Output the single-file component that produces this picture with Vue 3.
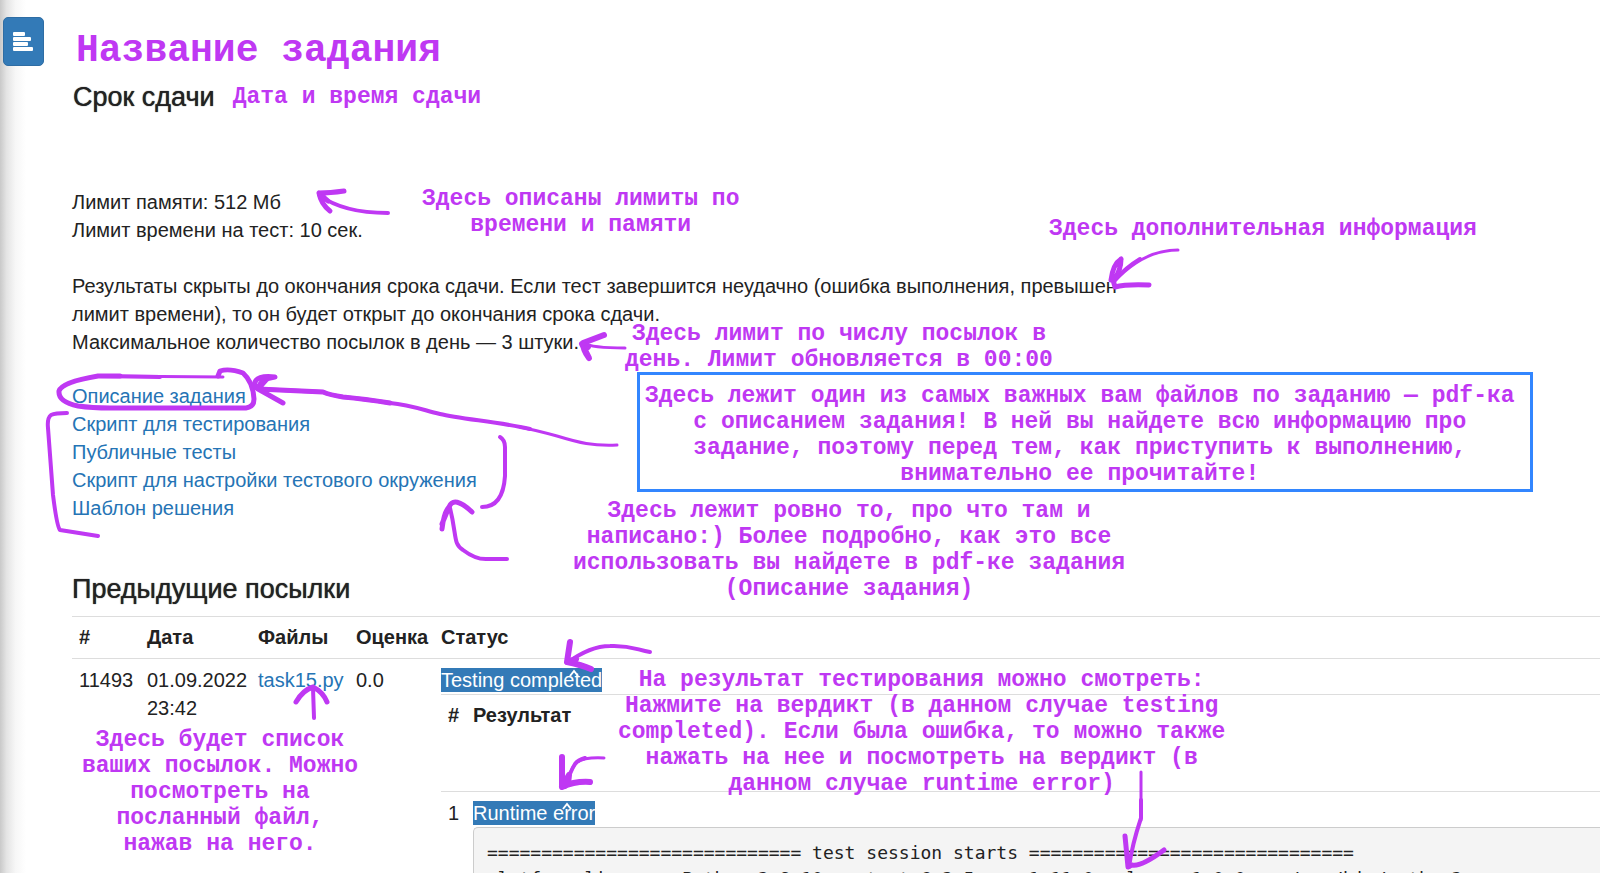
<script setup>
const files = [
  'Скрипт для тестирования',
  'Публичные тесты',
  'Скрипт для настройки тестового окружения',
  'Шаблон решения',
]

const log =
  '='.repeat(29) + ' test session starts ' + '='.repeat(30) +
  '\nplatform linux -- Python 3.8.10, pytest-6.2.5, py-1.11.0, pluggy-1.0.0 -- /usr/bin/python3'

const notes = [
  { id: 'note-limits', lines: ['Здесь описаны лимиты по', 'времени и памяти'] },
  { id: 'note-info', lines: ['Здесь дополнительная информация'] },
  { id: 'note-quota', lines: ['Здесь лимит по числу посылок в', 'день. Лимит обновляется в 00:00'] },
  {
    id: 'note-pdf',
    lines: [
      'Здесь лежит один из самых важных вам файлов по заданию — pdf-ка',
      'с описанием задания! В ней вы найдете всю информацию про',
      'задание, поэтому перед тем, как приступить к выполнению,',
      'внимательно ее прочитайте!',
    ],
  },
  {
    id: 'note-files',
    lines: [
      'Здесь лежит ровно то, про что там и',
      'написано:) Более подробно, как это все',
      'использовать вы найдете в pdf-ке задания',
      '(Описание задания)',
    ],
  },
  {
    id: 'note-verdict',
    lines: [
      'На результат тестирования можно смотреть:',
      'Нажмите на вердикт (в данном случае testing',
      'completed). Если была ошибка, то можно также',
      'нажать на нее и посмотреть на вердикт (в',
      'данном случае runtime error)',
    ],
  },
  {
    id: 'note-history',
    lines: ['Здесь будет список', 'ваших посылок. Можно', 'посмотреть на', 'посланный файл,', 'нажав на него.'],
  },
]
</script>

<template>
  <div class="page">
    <div class="edge"></div>
    <button class="menu" type="button" aria-label="Меню">
      <svg width="22" height="20" viewBox="0 0 22 20">
        <g fill="#fff">
          <rect x="1" y="0" width="12" height="4" rx="1" />
          <rect x="1" y="5" width="18" height="4" rx="1" />
          <rect x="1" y="10" width="15" height="4" rx="1" />
          <rect x="1" y="15" width="20" height="4" rx="1" />
        </g>
      </svg>
    </button>

    <main class="content">
      <h1>Название задания</h1>
      <div class="deadline">
        <h2>Срок сдачи</h2>
        <span class="when">Дата и время сдачи</span>
      </div>

      <p class="limits">Лимит памяти: 512 Мб<br />Лимит времени на тест: 10 сек.</p>
      <p class="rules">
        Результаты скрыты до окончания срока сдачи. Если тест завершится неудачно (ошибка выполнения, превышен<br />
        лимит времени), то он будет открыт до окончания срока сдачи.<br />
        Максимальное количество посылок в день — 3 штуки.
      </p>
      <ul class="files">
        <li><a href="#">Описание задания</a></li>
        <li v-for="f in files" :key="f"><a href="#">{{ f }}</a></li>
      </ul>

      <h2 class="previous">Предыдущие посылки</h2>
      <table class="outer">
        <thead>
          <tr>
            <th class="c-id">#</th>
            <th class="c-date">Дата</th>
            <th class="c-file">Файлы</th>
            <th class="c-mark">Оценка</th>
            <th>Статус</th>
          </tr>
        </thead>
        <tbody>
          <tr>
            <td>11493</td>
            <td>01.09.2022 23:42</td>
            <td><a href="#">task15.py</a></td>
            <td>0.0</td>
            <td class="status">
              <button class="verdict" type="button">
                Testing completed
                <svg class="caret" width="12" height="8" viewBox="0 0 12 8"><path d="M2 7 6 2 10 7" /></svg>
              </button>
              <table class="inner">
                <thead>
                  <tr><th class="c-num">#</th><th>Результат</th></tr>
                </thead>
                <tbody>
                  <tr>
                    <td>1</td>
                    <td>
                      <button class="verdict" type="button">
                        Runtime error
                        <svg class="caret" width="12" height="8" viewBox="0 0 12 8"><path d="M2 7 6 2 10 7" /></svg>
                      </button>
                      <pre>{{ log }}</pre>
                    </td>
                  </tr>
                </tbody>
              </table>
            </td>
          </tr>
        </tbody>
      </table>
    </main>

    <p v-for="n in notes" :key="n.id" class="note" :class="n.id">
      <span v-for="l in n.lines" :key="l">{{ l }}</span>
    </p>

    <svg class="ink" width="1600" height="873" viewBox="0 0 1600 873">
      <g fill="none" stroke="#bf38f3" stroke-linecap="round" stroke-linejoin="round">
        <path stroke-width="5" d="M344 191Q330 193 319 193Q321 204 330 211M319 193L328 201" />
        <path stroke-width="4" d="M319 195Q343 213 388 213" />

        <path stroke-width="3" d="M1178 250Q1143 250 1114 282" />
        <path stroke-width="4" d="M1140 259Q1125 268 1114 281" />
        <path stroke-width="5" d="M1121 259Q1113 264 1111 280L1114 280Q1121 270 1121 259M1113 280L1115 287Q1126 284 1149 285" />

        <path stroke-width="6" d="M604 335L583 343Q583 350 589 358L582 344L588 347" />
        <path stroke-width="3" d="M583 343Q592 348 625 348" />

        <path stroke-width="3" d="M223 377L100 376" />
        <path stroke-width="4" d="M160 377L98 376" />
        <path stroke-width="5" d="M120 376L98 376Q62 382 59 391Q58 402 78 406Q92 408 110 408L246 408Q254 407 254 399Q253 382 243 373Q229 368 220 371L218 376" />
        <path stroke-width="3" d="M617 445C592 446 580 443 557 436Q535 430 520 427" />
        <path stroke-width="4" d="M530 429C500 422 460 419 440 414C420 409 410 405 390 403Q365 399 343 397Q330 395 323 392Q300 391 258 389" />
        <path stroke-width="5" d="M390 403Q365 399 343 397Q330 395 323 392Q300 391 258 389L283 403M258 389Q260 379 275 377Q258 375 255 382Q253 386 258 389L266 380" />

        <path stroke-width="4" d="M67 413Q55 413 51 415Q47 418 48 428L53 495Q57 527 60 530L98 536" />
        <path stroke-width="4" d="M500 437Q505 440 505 447L505 476Q503 507 482 507" />
        <path stroke-width="5" d="M442 529Q444 512 449 507L442 524M449 507Q454 495 472 512" />
        <path stroke-width="4" d="M450 508C457 536 453 544 463 550Q476 560 488 559L507 559" />

        <path stroke-width="4" d="M650 652C637 650 631 645 610 646Q590 646 567 663" />
        <path stroke-width="6" d="M570 642L567 662L576 659M567 662Q582 665 591 669" />
        <path stroke-width="3" d="M604 758Q585 757 577 762Q572 766 565 787" />
        <path stroke-width="4" d="M585 758Q578 760 575 764Q571 770 565 787" />
        <path stroke-width="6" d="M562 757L562 787L569 775L568 784M562 787Q575 781 590 782" />

        <path stroke-width="4" d="M314 718L313 688" />
        <path stroke-width="5" d="M296 702Q303 690 313 687Q323 692 327 702" />

        <path stroke-width="3" d="M1141 772L1141 820" />
        <path stroke-width="4" d="M1141 800L1141 818Q1132 845 1129 867" />
        <path stroke-width="5" d="M1125 836L1128 867L1132 865Q1141 867 1164 850" />
      </g>
    </svg>
  </div>
</template>

<style>
html,
body {
  background: #fff;
}
</style>

<style scoped>
.page {
  position: relative;
  height: 100vh;
  overflow: hidden;
  font-family: "Liberation Sans", Arial, sans-serif;
  font-size: 20px;
  line-height: 28px;
  color: #222;
}
.edge {
  position: absolute;
  inset: 0 auto 0 0;
  width: 26px;
  background: linear-gradient(90deg, #c9c9c9, #e4e4e4 25%, #f7f7f7 60%, #fff);
}
.menu {
  position: absolute;
  top: 17px;
  left: 3px;
  width: 41px;
  height: 49px;
  padding: 0 0 0 8px;
  border: 1px solid #2e6da4;
  border-radius: 5px;
  background: #337ab7;
  text-align: left;
}
.menu svg {
  display: block;
}
.content {
  padding: 29px 0 0 72px;
}
h1,
h2,
p,
ul,
pre {
  margin: 0;
  padding: 0;
}
h1 {
  padding-left: 4px;
  font: bold 38px/44px "Liberation Mono", monospace;
  color: #bf38f3;
}
h2 {
  font-size: 27px;
  line-height: 30px;
  font-weight: 400;
  text-shadow: 0 0 1px currentColor;
}
.deadline {
  display: flex;
  align-items: center;
  gap: 18px;
  padding: 9px 0 0 1px;
}
.when {
  font: bold 23px/26px "Liberation Mono", monospace;
  color: #bf38f3;
}
.limits {
  padding-top: 76px;
}
.rules {
  padding-top: 28px;
  white-space: nowrap;
}
.files {
  padding-top: 26px;
  list-style: none;
}
a {
  color: #2574b5;
  text-decoration: none;
}
.previous {
  padding: 52px 0 12px;
}
table {
  width: 100%;
  border-collapse: separate;
  border-spacing: 0;
}
th,
td {
  padding: 7px;
  border-top: 1px solid #ddd;
  text-align: left;
  vertical-align: top;
}
.outer {
  table-layout: fixed;
}
.outer th {
  line-height: 27px;
}
.c-id {
  width: 54px;
}
.c-date {
  width: 97px;
}
.c-file {
  width: 84px;
}
.c-mark {
  width: 71px;
}
.status {
  padding: 7px 0 0 7px;
}
.verdict {
  position: relative;
  display: block;
  height: 24px;
  margin: 2px 0;
  padding: 0;
  border: 0;
  background: #337ab7;
  color: #fff;
  font: 20px/24px "Liberation Sans", Arial, sans-serif;
}
.caret {
  position: absolute;
  top: 1px;
  right: 22px;
  fill: none;
  stroke: #fff;
  stroke-width: 2px;
}
.inner {
  table-layout: fixed;
}
.inner th {
  height: 82px;
}
.inner .c-num {
  width: 11px;
}
.inner td:last-child {
  padding-right: 0;
}
pre {
  padding: 12px 13px;
  border: 1px solid #ccc;
  border-right: 0;
  border-radius: 5px 0 0 5px;
  background: #f4f4f4;
  font: 18px/26px "DejaVu Sans Mono", monospace;
}
.note {
  position: absolute;
  font: bold 23px/26px "Liberation Mono", monospace;
  color: #bf38f3;
  text-align: center;
  white-space: nowrap;
}
.note span {
  display: block;
}
.note-limits {
  top: 186px;
  left: 422px;
}
.note-info {
  top: 216px;
  left: 1049px;
}
.note-quota {
  top: 321px;
  left: 625px;
}
.note-pdf {
  top: 372px;
  left: 637px;
  padding: 8px 15px 2px 5px;
  border: 3px solid #3286ff;
}
.note-files {
  top: 498px;
  left: 573px;
}
.note-verdict {
  top: 667px;
  left: 618px;
}
.note-history {
  top: 727px;
  left: 82px;
}
.ink {
  position: absolute;
  top: 0;
  left: 0;
  pointer-events: none;
}
</style>
